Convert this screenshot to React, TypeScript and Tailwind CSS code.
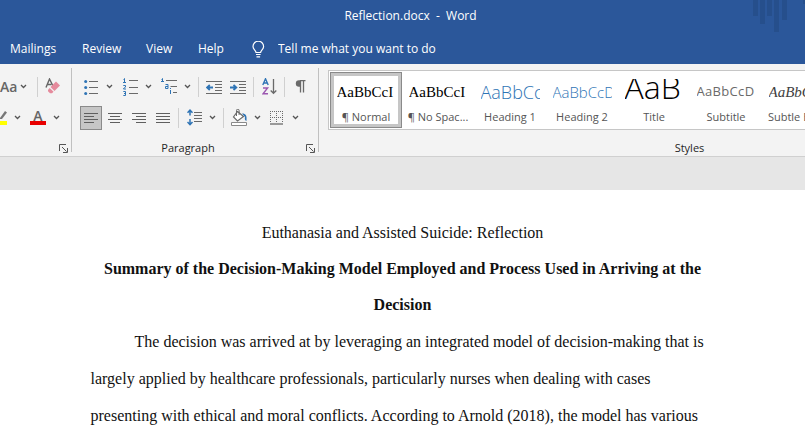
import type { ReactNode } from "react";

const G = "#6a6a6a";
const B = "#2f74b5";

function Caret() {
  return (
    <button type="button" aria-label="More options" className="flex h-6 w-3.5 items-center justify-center">
      <svg width="7" height="5" viewBox="0 0 7 5" fill="none" stroke="#555" strokeWidth="1.3">
        <path d="M1 1l2.5 2.5L6 1" />
      </svg>
    </button>
  );
}

function Tool({ label, active, children }: { label: string; active?: boolean; children: ReactNode }) {
  return (
    <button
      type="button"
      aria-label={label}
      className={
        active
          ? "flex h-6 w-[22px] items-center justify-center border border-[#8a8a8a] bg-[#c6c6c6]"
          : "flex h-6 w-[22px] items-center justify-center"
      }
    >
      {children}
    </button>
  );
}

function Separator() {
  return <div className="mx-1 h-5 w-px bg-[#d0d0d0]" />;
}

function Launcher({ label }: { label: string }) {
  return (
    <button type="button" aria-label={label} className="flex h-4 w-3 items-center justify-center">
      <svg width="9" height="9" viewBox="0 0 9 9" fill="none" stroke="#555" strokeWidth="1">
        <path d="M.5 7V.5H7M3 3l4.5 4.5M8.5 4v4.5H4" />
      </svg>
    </button>
  );
}

function Lines({ rows }: { rows: number[][] }) {
  return (
    <svg width="14" height="12" viewBox="0 0 14 12" stroke="#5f5f5f" strokeWidth="1">
      {rows.map(([a, b], i) => (
        <path key={i} d={`M${a} ${i * 3 + 1.5}H${b}`} />
      ))}
    </svg>
  );
}

function BulletsIcon() {
  return (
    <svg width="14" height="16" viewBox="0 0 14 16">
      <g fill={B}>
        <circle cx="1.7" cy="2.500" r="1.5" />
        <circle cx="1.7" cy="8.500" r="1.5" />
        <circle cx="1.7" cy="14.500" r="1.5" />
      </g>
      <path d="M5 2.5h9M5 8.5h9M5 14.5h9" stroke={G} />
    </svg>
  );
}

function NumberingIcon() {
  return (
    <svg width="15" height="18" viewBox="0 0 15 18" fill="none">
      <path d="M.5 1.5l1-1v4M0 4.5h3M.3 7.5h2.2v1.6L.5 10.5v.5H3M.3 13.5h2.2v4H.3M1 15.5h1.5" stroke={B} />
      <path d="M6 2.5h9M6 9.5h9M6 15.5h9" stroke={G} />
    </svg>
  );
}

function MultilevelIcon() {
  return (
    <svg width="17" height="17" viewBox="0 0 17 17" fill="none">
      <path d="M.5 1.5l1-1v3M0 3.5h3M4.5 6.5H7v4H4.5v-2H7M9.5 12v4M9.5 10v1" stroke={B} />
      <path d="M5 2.5h11M9.5 8.5H16M12 14.5h4" stroke={G} />
    </svg>
  );
}

function IndentIcon({ increase }: { increase?: boolean }) {
  return (
    <svg width="16" height="14" viewBox="0 0 16 14" fill="none">
      <path d="M0 1.5h16M9 4.5h7M9 7.5h7M9 10.5h7M0 13.5h16" stroke={G} />
      <path d={increase ? "M0 7.500h6M3.5 5L6.3 7.500 3.5 10" : "M7 7.500H1M3.8 5L1 7.500l2.8 2.500"} stroke={B} strokeWidth="1.8" />
    </svg>
  );
}

function SortIcon() {
  return (
    <svg width="15" height="17" viewBox="0 0 15 17" fill="none">
      <path d="M.8 7L3.5.8 6.2 7M1.8 5h3.4" stroke={B} strokeWidth="1.4" />
      <path d="M1 10h4.6L1 15.8h5" stroke="#9b57b0" strokeWidth="1.4" />
      <path d="M11.5 1v14M8.7 12.5l2.8 2.8 2.8-2.8" stroke={G} strokeWidth="1.3" />
    </svg>
  );
}

function PilcrowIcon() {
  return (
    <svg width="11" height="13" viewBox="0 0 11 13">
      <path d="M5 .5h5.5M5.5 1v11.5M8.5 1v11.5" stroke={G} strokeWidth="1.3" />
      <path d="M5.5.3H4a3.2 3.2 0 000 6.4h1.5z" fill={G} />
    </svg>
  );
}

function SpacingIcon() {
  return (
    <svg width="15" height="17" viewBox="0 0 15 17" fill="none">
      <path d="M3 1.2v5.3M3 10v5.8M.5 3.8L3 1.2l2.5 2.6M.5 13L3 15.7 5.5 13" stroke={B} strokeWidth="1.5" />
      <path d="M7 3.5h8M7 6.5h8M7 9.5h8M7 12.5h8" stroke={G} />
    </svg>
  );
}

function BucketIcon() {
  return (
    <svg width="17" height="17" viewBox="0 0 17 17" fill="none">
      <path d="M6.5 2.5l6 5-6 4.5-4-4z" fill="#fff" stroke={G} strokeWidth="1.2" />
      <path d="M5.5 7V1.5a1.3 1.3 0 012.6 0V6" stroke={G} />
      <path d="M11 4.5c4 0 5 2 4.5 7.5-1.5-.5-2-1.5-1.5-4z" fill={B} />
      <path d="M.5 13.5h15v3H.5z" fill="#fff" stroke="#8a8a8a" />
    </svg>
  );
}

function BordersIcon() {
  return (
    <svg width="14" height="14" viewBox="0 0 14 14" fill="none" stroke={G}>
      <path d="M0 .5h13M0 6.5h13M.5 0v12M6.5 0v12M12.5 0v12" strokeDasharray="1 1" />
      <path d="M0 13h13" strokeWidth="1.3" />
    </svg>
  );
}

function EraserIcon() {
  return (
    <svg width="16" height="17" viewBox="0 0 16 17" fill="none">
      <path d="M1 9.5L4.5 1 8 8M2.3 6.5h4" stroke="#666" strokeWidth="1.4" />
      <path d="M11 3.5l4 4-5.5 5.5-4-4z" fill="#e58a9c" />
      <path d="M4.7 10l3.8 3.8-1.5 1.5H5L3 13.2v-1.5z" fill="#e58a9c" />
    </svg>
  );
}

const styles = [
  { name: "¶ Normal", sample: "AaBbCcI", look: "items-center font-['Liberation_Serif',serif] text-[15px] text-black" },
  { name: "¶ No Spac...", sample: "AaBbCcI", look: "items-center font-['Liberation_Serif',serif] text-[15px] text-black" },
  { name: "Heading 1", sample: "AaBbCc", look: "items-center font-light text-[18px] text-[#2e74b5]" },
  { name: "Heading 2", sample: "AaBbCcD", look: "items-center font-light text-[15px] text-[#2e74b5]" },
  { name: "Title", sample: "AaB", look: "items-start font-light text-[32px] leading-4 text-black" },
  { name: "Subtitle", sample: "AaBbCcD", look: "items-center text-[13px] tracking-wide text-[#6a6a6a]" },
  { name: "Subtle Em...", sample: "AaBbCcD", look: "items-center font-['Liberation_Serif',serif] italic text-[15px] text-[#404040]" },
];

export default function App() {
  return (
    <div className="flex h-screen flex-col overflow-hidden bg-white font-['Open_Sans',sans-serif] text-[12px]">
      <header className="relative shrink-0 bg-[#2b579a] text-white">
        <svg className="absolute top-0 right-0" width="52" height="32" viewBox="0 0 52 32" fill="#264f8c">
          <path d="M0 0h5v16H0zM7 0h5v24H7zM14 0h5v16h-5zM21 0h5v32h-5zM29 0h5v20h-5zM50 0h2v4h-2z" />
        </svg>
        <h1 className="h-8 pl-4 text-center leading-8 whitespace-pre">Reflection.docx  -  Word</h1>
        <nav className="flex h-8 items-center pt-0.5 pl-2.5">
          <button type="button" className="w-[72px] text-left">Mailings</button>
          <button type="button" className="w-16 text-left">Review</button>
          <button type="button" className="w-[52px] text-left">View</button>
          <button type="button" className="w-[54px] text-left">Help</button>
          <label htmlFor="tell-me" aria-label="Tell me what you want to do" className="w-[26px]">
            <svg width="13" height="17" viewBox="0 0 13 17" fill="none" stroke="#fff" strokeWidth="1.2">
              <path d="M4 11.5c0-2-3-3-3-6a5.3 5.3 0 0110.6 0c0 3-3 4-3 6zM4 13.5h4.6M4.5 15.8h3.6" />
            </svg>
          </label>
          <input
            id="tell-me"
            type="text"
            placeholder="Tell me what you want to do"
            className="w-52 bg-transparent outline-none placeholder:text-white"
          />
        </nav>
      </header>

      <section aria-label="Ribbon" className="flex h-[93px] shrink-0 overflow-hidden border-b border-[#d0d0d0] bg-[#f3f3f3] text-[#262626]">
        <div className="my-1 flex w-[72px] shrink-0 flex-col border-r border-[#c0c0c0] pt-[3px]">
          <div className="flex h-[31px] shrink-0 items-center">
            <button type="button" className="w-4 text-left text-[14px] font-semibold text-[#666]">Aa</button>
            <Caret />
            <div className="mr-1 ml-[7px] h-5 w-px bg-[#d0d0d0]" />
            <Tool label="Clear formatting"><EraserIcon /></Tool>
          </div>
          <div className="flex h-[31px] shrink-0 items-center">
            <button type="button" aria-label="Text highlight colour" className="w-2.5">
              <svg width="8" height="17" viewBox="0 0 8 17">
                <path d="M0 9l5-7 2 1.5L2 10H0z" fill="#777" />
                <path d="M0 12h7v4H0z" fill="#ffff00" />
              </svg>
            </button>
            <Caret />
            <button type="button" aria-label="Font colour" className="ml-1.5 flex w-4 flex-col items-center">
              <span className="h-[11px] text-[14px] leading-[11px] font-semibold text-[#666]">A</span>
              <span className="h-1 w-4 bg-[#e80000]" />
            </button>
            <div className="ml-[3px]"><Caret /></div>
          </div>
          <div className="mt-[7px] flex h-4 shrink-0 items-center justify-end pr-0.5">
            <Launcher label="Font settings" />
          </div>
        </div>

        <div className="my-1 flex w-[247px] shrink-0 flex-col border-r border-[#c0c0c0] pt-[3px]">
          <div className="flex h-[31px] shrink-0 items-center pl-2">
            <Tool label="Bullets"><BulletsIcon /></Tool>
            <Caret />
            <div className="ml-[3px] flex">
              <Tool label="Numbering"><NumberingIcon /></Tool>
              <Caret />
            </div>
            <div className="ml-[3px] flex">
              <Tool label="Multilevel list"><MultilevelIcon /></Tool>
              <Caret />
            </div>
            <Separator />
            <Tool label="Decrease indent"><IndentIcon /></Tool>
            <div className="ml-0.5 flex"><Tool label="Increase indent"><IndentIcon increase /></Tool></div>
            <Separator />
            <Tool label="Sort"><SortIcon /></Tool>
            <Separator />
            <Tool label="Show paragraph marks"><PilcrowIcon /></Tool>
          </div>
          <div className="flex h-[31px] shrink-0 items-center pl-2">
            <div className="flex gap-0.5">
              <Tool label="Align left" active><Lines rows={[[0, 14], [0, 10], [0, 14], [0, 10]]} /></Tool>
              <Tool label="Center"><Lines rows={[[0, 14], [2, 12], [0, 14], [2, 12]]} /></Tool>
              <Tool label="Align right"><Lines rows={[[0, 14], [4, 14], [0, 14], [4, 14]]} /></Tool>
              <Tool label="Justify"><Lines rows={[[0, 14], [0, 14], [0, 14], [0, 14]]} /></Tool>
            </div>
            <Separator />
            <Tool label="Line spacing"><SpacingIcon /></Tool>
            <Caret />
            <Separator />
            <Tool label="Shading"><BucketIcon /></Tool>
            <Caret />
            <div className="ml-0.5 flex">
              <Tool label="Borders"><BordersIcon /></Tool>
              <Caret />
            </div>
          </div>
          <div className="mt-[7px] flex h-4 shrink-0 items-center pr-0.5">
            <span className="flex-1 text-center text-[11px] leading-4">Paragraph</span>
            <Launcher label="Paragraph settings" />
          </div>
        </div>

        <div className="flex w-[732px] shrink-0 flex-col pt-1.5 pl-[9px]">
          <div className="flex h-[60px] border border-[#c6c6c6] bg-white p-px">
            {styles.map((s, i) => (
              <button
                type="button"
                key={s.name}
                className={
                  i === 0
                    ? "flex h-14 w-[72px] shrink-0 flex-col items-center border border-[#8a8a8a] bg-white pt-1.5 inset-ring-3 inset-ring-[#c6c6c6]"
                    : "flex h-14 w-[72px] shrink-0 flex-col items-center pt-[7px]"
                }
              >
                <span className={`flex h-[26px] w-[59px] overflow-hidden whitespace-nowrap ${s.look}`}>{s.sample}</span>
                <span className="mt-1 text-[11px] leading-4 whitespace-nowrap text-[#555]">{s.name}</span>
              </button>
            ))}
          </div>
          <div className="mt-2.5 h-4 text-center text-[11px] leading-4">Styles</div>
        </div>
      </section>

      <div className="h-[33px] shrink-0 bg-[#e6e6e6]" />

      <main className="mx-auto min-h-0 w-full max-w-[624px] flex-1 pt-6 font-['Liberation_Serif',serif] text-[16px] text-[#111]">
        <p className="text-center leading-[37px]">Euthanasia and Assisted Suicide: Reflection</p>
        <h2 className="text-center leading-9 font-bold">
          Summary of the Decision-Making Model Employed and Process Used in Arriving at the Decision
        </h2>
        <p className="indent-11 leading-[37px]">
          The decision was arrived at by leveraging an integrated model of decision-making that is largely applied by
          healthcare professionals, particularly nurses when dealing with cases presenting with ethical and moral
          conflicts. According to Arnold (2018), the model has various
        </p>
      </main>
    </div>
  );
}
